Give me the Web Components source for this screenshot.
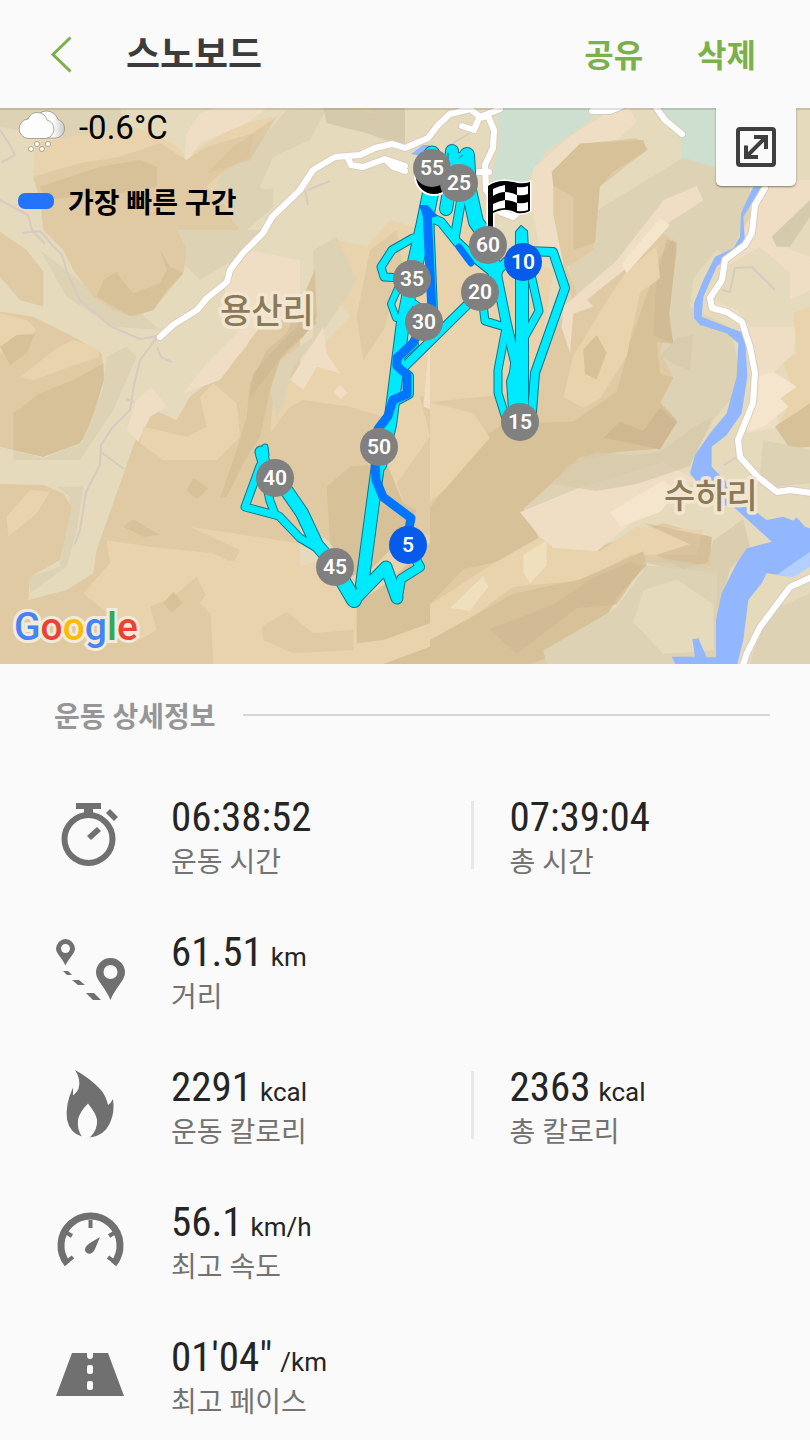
<!DOCTYPE html>
<html lang="ko">
<head>
<meta charset="utf-8">
<meta name="viewport" content="width=device-width, initial-scale=1">
<title>스노보드</title>
<style>
    body{
        margin: 0;
        background: #fafafa;
        font-family: Roboto, "Noto Sans CJK KR", sans-serif;
        color: #252525;
    }
</style>
</head>
<body>
<workout-page></workout-page>

<script>
class AppHeader extends HTMLElement{

    constructor() {
        super();
        this.shadowDOM = this.attachShadow({mode: "open"});
    }

    connectedCallback(){
        this.render();
    }

    render(){
        this.shadowDOM.innerHTML = `
        <style>
            :host{
                display: block;
            }
            header{
                display: flex;
                align-items: center;
                box-sizing: border-box;
                height: 108px;
                padding: 0 54px 0 48px;
                background: #fafafa;
            }
            button{
                padding: 0;
                border: 0;
                background: none;
                font: inherit;
                color: #7cb04b;
                cursor: pointer;
            }
            svg{
                display: block;
                width: 26px;
                height: 40px;
            }
            h1{
                flex: 1;
                margin: 0 0 0 52px;
                padding-top: 4px;
                font-size: 37px;
                font-weight: 700;
                line-height: 48px;
                color: #3c3c3c;
            }
            nav{
                display: flex;
                gap: 54px;
                padding-top: 4px;
                font-size: 32px;
                font-weight: 700;
                line-height: 48px;
            }
        </style>
        <header>
            <button aria-label="뒤로">
                <svg viewBox="0 0 26 40" fill="none" stroke="#7cb04b" stroke-width="3">
                    <path d="M22.500 3.500L5 20.500l17.500 17"/>
                </svg>
            </button>
            <h1><slot></slot></h1>
            <nav>
                <button>공유</button>
                <button>삭제</button>
            </nav>
        </header>
        `;
    }
}

// numbered kilometre marker, x and y are in map units
class KmPin extends HTMLElement{

    constructor() {
        super();
        this.shadowDOM = this.attachShadow({mode: "open"});
    }

    connectedCallback(){
        this.style.left = `${this.getAttribute('x') / 810 * 100}%`;
        this.style.top = `${(this.getAttribute('y') - 108) / 556 * 100}%`;
        this.render();
    }

    render(){
        this.shadowDOM.innerHTML = `
        <style>
            :host{
                position: absolute;
                width: 38px;
                height: 38px;
                margin: -19px 0 0 -19px;
                border-radius: 50%;
                background: #808080;
                color: #fff;
                font-size: 21px;
                font-weight: 600;
                line-height: 38px;
                text-align: center;
            }
            :host([fast]){
                background: #065bea;
            }
        </style>
        <slot></slot>
        `;
    }
}

// recorded route: [points, width]
const tracks = [
    ['432,154 432,186 424,225 411,282', 15],
    ['411,282 403,322 390,425 380,465', 12],
    ['378,465 362,585', 12],
    ['413,238 392,250 381,267 384,277 402,278', 7],
    ['398,288 391,304 396,318 404,318', 6],
    ['410,285 412,302 424,310', 6],
    ['452,151 450,185 446,209', 12],
    ['459,159 462,190', 12],
    ['467,155 469,190 476,222 489,240', 14],
    ['462,195 455,236', 8],
    ['424,220 434,219 441,222 457,242 470,254 490,270', 8],
    ['488,245 495,272', 14],
    ['493,276 507,261 522,256', 8],
    ['496,272 506,322 515,360', 9],
    ['482,296 485,321 505,327', 7],
    ['506,328 498,370 498,393 507,422', 7],
    ['530,270 539,311 524,338', 7],
    ['526,251 553,252 565,288 535,373 532,412', 8],
    ['468,304 401,370', 8],
    ['430,212 434,312', 6],
    ['414,344 398,358 398,367 409,376 409,394 394,402', 8],
    ['334,566 354,600', 14],
    ['356,598 386,567 397,598', 11],
    ['398,597 401,579 420,567 414,556', 8],
    ['282,484 302,513 317,545 330,560', 12],
    ['317,548 300,538 279,516 245,507 260,466', 7],
    ['261,452 267,474', 11],
    ['265,447 266,455', 5],
    ['267,487 270,501 275,514', 7]
];
const fastTracks = [
    ['427,211 432,312', 9],
    ['459,247 471,263', 7],
    ['422,326 413,343 397,358 397,366 407,375 407,394 393,400 388,416 378,429', 9],
    ['375,460 376,480 383,497 411,518 408,534', 9]
];
const column = 'M516 232L521 226 527 231 528 250V410H509L507 381 510 372 512 356 516 342z';
const roads = [
    'M160 337L173 325 197 310 207 298 227 282 230 270 243 253 263 233 272 217 300 190 313 170 335 157 360 155 375 148 392 144 405 148 428 138 438 125 450 114 470 109 480 117 500 109',
    'M348 158L351 165 363 167 385 159 405 166M385 159L393 167 405 171M462 126L474 130 479 118 488 116 494 130 493 148 485 165 486 190 500 212 513 217 524 207M477 172H489',
    'M592 111H610L622 106M655 106L665 120 682 134',
    'M765 188L755 205 752 233 745 245 725 260 722 280 710 298 712 308 727 312 742 322 750 347 755 373 753 403 738 440 740 457 758 477 777 492 790 490 812 493',
    'M812 577L790 587 760 627 747 653 742 668'
].join('');
const line = (list, extra) => list.map(([p, w]) => `<polyline points="${p}" stroke-width="${w + extra}"/>`).join('');

class RouteMap extends HTMLElement{

    constructor() {
        super();
        this.shadowDOM = this.attachShadow({mode: "open"});
    }

    connectedCallback(){
        this.render();
    }

    render(){
        this.shadowDOM.innerHTML = `
        <style>
            :host{
                display: block;
                position: relative;
                overflow: hidden;
                color: #000;
            }
            .map{
                display: block;
                width: 100%;
                height: auto;
            }
            .names{
                font-family: "Noto Sans CJK KR", sans-serif;
                font-size: 34px;
                font-weight: 500;
                fill: #8b7a5a;
                stroke: #f3e6d0;
                stroke-width: 7px;
                stroke-linejoin: round;
                paint-order: stroke;
            }
            .info{
                position: absolute;
                left: 18px;
                top: 0;
                line-height: 36px;
            }
            .weather, .legend{
                display: flex;
                align-items: center;
            }
            .weather{
                gap: 13px;
                font-size: 33px;
                line-height: 40px;
            }
            .weather svg{
                width: 48px;
                height: 44px;
            }
            .weather span{
                padding-bottom: 6px;
            }
            .legend{
                gap: 14px;
                margin-top: 26px;
                font-size: 28px;
                font-weight: 700;
            }
            .legend i{
                width: 36px;
                height: 16px;
                border-radius: 7px;
                background: #2374fb;
            }
            .legend span{
                padding-top: 6px;
            }
            .expand{
                position: absolute;
                top: 0;
                right: 14px;
                width: 80px;
                height: 78px;
                padding: 0;
                border: 0;
                border-radius: 0 0 5px 5px;
                background: #fafafa;
                box-shadow: 0 1px 2px rgba(0, 0, 0, .45);
            }
            .expand svg{
                display: block;
                margin: auto;
            }
            .logo{
                position: absolute;
                left: 14px;
                bottom: 14px;
                font-size: 39px;
                font-weight: 500;
                line-height: 46px;
                -webkit-text-stroke: 6px #f3ead9;
                paint-order: stroke fill;
            }
            .edge{
                position: absolute;
                inset: 0 0 auto;
                height: 2px;
                background: rgba(0, 0, 0, .12);
            }
        </style>
        <svg class="map" viewBox="0 108 810 556">
            <rect y="108" width="810" height="556" fill="#e5dabb"/>

            <!-- north west ridge -->
            <g transform="scale(.33333)">
                <path fill="#ddd2b4" d="M0 324H360L390 400 300 440 0 380zM640 520L740 440 800 400 860 330 980 324 930 420 820 470 780 560 810 600 740 690 640 740z"/>
                <path fill="#e8d3ad" d="M105 430L270 400 400 380 520 430 560 470 700 380 820 350 760 440 660 520 640 600 700 720 480 720 360 700 160 600 100 540z"/>
                <path fill="#efdec4" d="M560 400L600 340 640 324H800L740 370 600 430 550 500z"/>
                <path fill="#dfcaa4" d="M100 530L240 490 360 470 480 430 560 480 620 440 760 400 750 470 660 520 620 560 650 600 730 650 700 720H250L130 640z"/>
                <path fill="#d7c199" d="M120 560L300 500 420 480 470 500 470 560 380 580 400 660 330 620 140 600z"/>
                <path fill="#d7c199" d="M620 520L700 440 830 350 750 480z" opacity=".6"/>
                <path fill="#ddd2b4" d="M660 580L820 565 820 620 730 700 690 650zM880 370L920 330 944 380 900 415z"/>
                <path fill="#d5caab" d="M970 324H1215V440L1100 400 980 370z"/>
                <path fill="#dfcaa4" d="M1060 324H1110L1130 345 1100 335z"/>
            </g>
            <!-- western hills -->
            <g transform="translate(0 230) scale(.33333)">
                <path fill="#ddd2b4" d="M480 0H780L700 90 600 150 540 90zM120 60L300 200 420 250 480 300 340 290 200 200z"/>
                <path fill="#dfcaa4" d="M130 0L120 -90 470 -120 560 60 550 130 500 190 460 240 400 260 340 240 280 200 220 120 190 60z"/>
                <path fill="#d7c199" d="M480 60L510 110 550 130 500 180 460 240 390 258 290 200 310 150 350 125 365 150 400 190 480 160 500 120z"/>
                <path fill="#dfcaa4" d="M0 5L80 60 130 125 130 230 60 210 0 140zM0 245L100 260 220 320 305 370 312 440 290 530 250 630 130 680 40 660 0 650z"/>
                <path fill="#d7c199" d="M40 550L120 490 220 450 310 400 312 450 270 580 240 640 130 680 40 660z"/>
                <path fill="#e8d3ad" d="M0 250L80 270 110 300 20 370 0 370zM60 440L170 355 220 330 290 355 300 380 210 410 100 450z"/>
                <path fill="#d7c199" d="M0 350L50 315 105 312 80 370 30 405z"/>
                <path fill="#ddd2b4" d="M320 380L380 350 410 380 340 540 240 690H40V660L130 685 250 635 310 470zM90 1040L180 1010 210 800 170 770 250 770 230 900 200 1010 90 1090z"/>
                <path fill="#dfcaa4" d="M0 762L130 765 190 790 215 830 180 990 90 1040 85 1110 200 1080 280 1030 290 960 410 620 460 540 530 570 570 500 660 430 740 350 780 250 900 180V1302H0z"/>
                <path fill="#efdec4" d="M690 120L740 60 900 90V250L780 290 660 450 550 490 620 400 730 290 660 250zM455 470L500 530 450 560 415 635 380 600 410 510z"/>
                <path fill="#e8d3ad" d="M20 860L90 780 150 785 110 850 25 920zM600 500L640 460 710 520 720 620 650 690 490 690 420 640 430 590 560 620 620 590zM320 930L450 950 640 970 700 1000 720 960 570 890 900 940V1302H640L630 1120 590 1040 520 1100 450 1130 470 1200 420 1230 250 1090 330 1000z"/>
                <path fill="#d7c199" d="M370 890L400 868 480 915 430 920zM490 1120L520 1085 548 1118 515 1148zM560 780L580 745 625 775 590 808z"/>
            </g>
            <!-- central slopes -->
            <g transform="translate(170 250) scale(.33333)">
                <path fill="#e8d3ad" d="M430 30L500 -30 590 -10 660 -90 760 -60 900 -130V1242H240L130 1100 90 1060 180 930 330 970 540 900 470 600 300 560 310 440 540 200z"/>
                <path fill="#ddd2b4" d="M430 0L500 -40 560 90 470 230 370 350 340 460 320 510 300 420 330 330 430 260z"/>
                <path fill="#d7c199" d="M435 60L440 200 400 260 330 330 300 420 290 470 270 560 220 640 170 740 150 745 200 600 230 500 240 400 290 300 350 250z"/>
                <path fill="#cfb891" d="M430 180L440 220 340 310 290 380 240 440 250 370 330 280z" opacity=".7"/>
                <path fill="#dfcaa4" d="M400 450L540 470 640 500 600 600 580 760 600 900 560 930 440 850 340 720 300 550 360 470zM600 0L680 -60 700 60 640 240 580 330 560 200zM750 440L900 420V830L740 860 680 700 780 560z"/>
                <path fill="#d7c199" d="M470 710L540 650 650 640 700 760 740 780 700 860 600 960 540 980 480 880zM560 1060L650 1000 760 900 900 760V1062L780 1120 640 1170 560 1180zM900 1170L780 1190 640 1242H900z"/>
                <path fill="#dfcaa4" d="M275 1130L350 1085 430 1150 550 1140 550 1200 370 1210 280 1170z"/>
                <path fill="#efdec4" d="M360 390L460 230 470 310 510 370 440 350 400 420zM780 250L840 310 830 360 790 370 790 480 760 470zM490 425L510 405 533 428 512 447z"/>
                <path fill="#cfb891" d="M785 950L860 890 870 940 840 995z"/>
            </g>
            <!-- eastern hills -->
            <g transform="translate(430 108) scale(.33333 .3546)">
                <path fill="#e8d3ad" d="M0 278L120 320 200 380 370 460 330 700 300 800 0 830z"/>
                <path fill="#cddfce" d="M200 0H520L460 50 350 120 300 190 280 240 180 260 190 170 210 90zM670 0H960V200L860 195 755 160 755 90z"/>
                <path fill="#efdec4" d="M310 170L420 80 520 20 600 0 620 40 560 90 440 120 390 180 385 320 400 440 330 400 300 250z"/>
                <path fill="#ddd2b4" d="M480 300L760 140 960 200V460L860 400 790 480 780 560 900 620 940 780 850 880 780 1000 650 1060 440 1150 270 1130 400 980 520 850 380 600 420 440z"/>
                <path fill="#dfcaa4" d="M370 180L460 100 620 85 655 115 580 170 500 230 490 400 410 450 440 520 330 700 300 800 0 830V1568H350L480 1500 640 1280 840 1290 845 1210 700 1170 500 1240 330 1215 280 1130 440 1000 560 970 690 960 740 885 690 840 730 760 690 690 720 560 740 380 690 350 560 460 460 560 430 560 400 440 370 300z"/>
                <path fill="#d7c199" d="M365 180L450 100 640 90 650 120 550 180 510 220 495 380 430 400 430 250 370 220zM730 370L740 400 715 600 730 665 680 660 690 750 730 760 690 830 740 880 690 960 560 970 450 985 280 1130 330 1220 200 1280 100 1300 0 1400V1130L130 950 220 890 430 885 560 800 600 660 690 420z"/>
                <path fill="#cfb891" d="M710 370L740 380 718 580 730 665 670 640 680 480z" opacity=".7"/>
                <path fill="#cfb891" d="M690 845L742 885 690 962 520 930 570 885 640 910z"/>
                <path fill="#e8d3ad" d="M590 460L680 390 690 480 630 520 590 700 510 820 460 845 400 815 430 700 520 560zM0 1400L180 1290 330 1210 510 1250 620 1180 820 1190 800 1260 600 1260 480 1330 250 1350 120 1440 0 1500zM0 830L130 860 180 930 40 1080 0 1110z"/>
                <path fill="#d7c199" d="M460 680L500 640 530 690 500 765 465 750zM0 1500L250 1370 450 1330 640 1250 650 1290 560 1380 490 1500 300 1568H0z"/>
                <path fill="#cfb891" d="M180 1470L370 1400 480 1330 600 1280 640 1290 560 1400 440 1410 260 1540zM640 1170L845 1210 840 1280 760 1300 680 1260 780 1230z" opacity=".6"/>
                <path fill="#efdec4" d="M270 1140L450 1070 700 1000 800 1050 620 1160 500 1250 370 1240 330 1210zM400 560L560 430 700 260 800 220 820 260 690 340 580 460 470 540 490 560 430 580 420 690 395 620z"/>
                <path fill="#f5e5cd" d="M540 1140L700 1050 740 1080 690 1140 570 1180zM575 440L690 310 720 330 590 465z"/>
                <path fill="#efdfbc" d="M280 1260L350 1220 350 1290 300 1340 280 1310zM60 1410L160 1320 175 1350 120 1418z"/>
                <path fill="#d5caab" d="M690 700L740 650 790 640 780 740 730 720zM370 1060L410 1010 500 970 610 980 690 970 790 900 850 870 780 1010 620 1060 500 1080zM640 1280L700 1270 830 1290 850 1220 940 1160 960 1240 900 1300 860 1440 800 1320z" opacity=".75"/>
                <path fill="#ddd2b4" d="M340 1530L560 1410 650 1290 860 1310 860 1568H350z"/>
                <path fill="#e5dabb" d="M610 1450L640 1360 740 1330 850 1400 850 1530 700 1540z"/>
            </g>
            <!-- south east valley -->
            <g transform="translate(560 180) scale(.33333)">
                <path fill="#efdec4" d="M620 20L700 0H750V60L640 190 750 230V330L690 360 710 400 700 520 620 600 660 740 560 760 590 620 560 430 460 380 500 240z"/>
                <path fill="#e5dabb" d="M500 260L600 200 690 280 690 370 720 400 700 440 570 440 530 390 460 360z"/>
                <path fill="#d5caab" d="M635 170L750 60V110L690 200 650 200z"/>
                <path fill="#e8d3ad" d="M700 400L750 380V700L650 740 685 680 660 650 700 630 670 550 710 520z"/>
                <path fill="#d7c199" d="M645 740L750 670V800L690 805z"/>
                <path fill="#f5e5cd" d="M590 590L640 575 710 620 660 655 685 680 610 740 560 755z"/>
                <path fill="#ddd2b4" d="M610 780L750 810V910L650 920 600 880zM600 1350L660 1280 750 1240V1452H570z"/>
            </g>

            <!-- streams -->
            <g fill="none" stroke="#d6cbc1" stroke-width="2" stroke-linejoin="round">
                <path d="M22 233L40 231 52 245 62 255 68 275 80 300 110 326 140 339 158 336 140 360 134 385 130 410 112 428 101 445 100 465 86 492 80 530 75 544M157 347L161 357 172 362M101 452L124 469M0 130L10 145 15 155 2 162M0 200L28 215 32 230 45 244M126 399L134 402"/>
                <path d="M305 190L308 205M308 190L330 181M722 290L730 292 735 268 752 267 775 290M724 465L735 458 745 462M450 145L470 133"/>
            </g>
            <!-- river and lake -->
            <g transform="translate(560 180) scale(.33333)" fill="#92b7ff">
                <path d="M580 20L543 100 540 170 520 205 465 230 430 300 402 370V415L420 435 500 460 535 490 530 590 500 700 450 760 405 825 390 880 460 970 520 980 635 1085 560 1105 530 1150 485 1240 468 1320V1432H440L415 1375 397 1378 405 1430 335 1430 350 1460H530L550 1380 565 1260 605 1210 620 1180 700 1190 750 1130V1045L735 1040 710 1012 700 1022 670 1010 620 1020 580 990 455 860V800L500 765 545 700 562 590 555 460 500 440 425 410 430 350 470 260 555 185 550 110 605 20z"/>
                <path fill="#b3cfff" d="M650 1185L750 1115V1160L700 1192z"/>
            </g>
            <path fill="#92b7ff" d="M411 154L423 145 430 145 422 156z"/>
            <!-- roads -->
            <g fill="none" stroke-linecap="round" stroke-linejoin="round">
                <path stroke="#d9cdc0" stroke-width="8" d="${roads}"/>
                <path stroke="#fff" stroke-width="6" d="${roads}"/>
            </g>
            <g class="names">
                <text x="220" y="323">용산리</text>
                <text x="664" y="508">수하리</text>
            </g>

            <!-- recorded route -->
            <g fill="none" stroke-linejoin="round" stroke-linecap="round">
                <g stroke="#0e7389">${line(tracks, 2)}</g>
                <path stroke="#0e7389" stroke-width="2" d="${column}"/>
                <g stroke="#00eaff">${line(tracks, 0)}</g>
                <path fill="#00eaff" d="${column}"/>
                <g stroke="#0075ff">${line(fastTracks, 0)}</g>
                <path fill="#0075ff" d="M419 205h8l11 11-8 2-7-2z"/>
                <path stroke="#0e7389" d="M448 153v10M459 158l4-3"/>
            </g>
            <!-- start and finish -->
            <circle cx="434" cy="176" r="19" fill="#000" stroke="#fff" stroke-width="2"/>
            <path fill="#000" stroke="#fff" stroke-width="3" paint-order="stroke" d="M488 186q7-5 16-5 8 0 14 2 6 1 12-1v29q-6 3-13 2-8-4-15-3-5 1-9 3v20h-5z"/>
            <path fill="#fff" d="M493 189q6-3 12-4v7q-6 0-12 4zM517 187q6 1 11-1v8q-5 2-11 1zM505 192q6 0 12 3v8q-6-3-12-3zM493 204q6-3 12-4v8q-6 0-12 3zM517 203q6 1 11-1v8q-5 2-11 1z"/>
        </svg>
        <div class="edge"></div>
        <km-pin x="432" y="168">55</km-pin>
        <km-pin x="459" y="183">25</km-pin>
        <km-pin x="488" y="245">60</km-pin>
        <km-pin x="523" y="262" fast>10</km-pin>
        <km-pin x="412" y="279">35</km-pin>
        <km-pin x="480" y="292">20</km-pin>
        <km-pin x="424" y="322">30</km-pin>
        <km-pin x="520" y="422">15</km-pin>
        <km-pin x="379" y="447">50</km-pin>
        <km-pin x="275" y="478">40</km-pin>
        <km-pin x="408" y="545" fast>5</km-pin>
        <km-pin x="335" y="567">45</km-pin>

        <div class="info">
            <div class="weather">
                <svg viewBox="0 0 48 44">
                    <defs>
                        <linearGradient id="back"><stop offset=".5" stop-color="#fff"/><stop offset="1" stop-color="#c9c9c9"/></linearGradient>
                    </defs>
                    <g stroke="#8d8672" stroke-width=".7">
                        <path fill="url(#back)" d="M22 29h16a9.500 9.500 0 0 0 2-18.500A12 12 0 0 0 22 4z"/>
                        <path fill="#fdfdfd" d="M10 29.500h18a9.500 9.500 0 0 0 1-18.500 10 10 0 0 0-19-1 9.800 9.800 0 0 0 0 19.500z"/>
                        <g fill="#fff">
                            <circle cx="19" cy="35" r="2.500"/><circle cx="30" cy="35" r="2.500"/>
                            <circle cx="13" cy="40" r="2.500"/><circle cx="24" cy="40" r="2.500"/>
                        </g>
                    </g>
                </svg>
                <span>-0.6°C</span>
            </div>
            <div class="legend"><i></i><span>가장 빠른 구간</span></div>
        </div>
        <button class="expand" aria-label="지도 확대">
            <svg width="40" height="40" viewBox="0 0 40 40" fill="none" stroke="#3f3f3f" stroke-width="4">
                <rect x="2" y="2" width="36" height="36" rx="2"/>
                <path d="M18 10h12v12M10 18.500V30h12M29 11L11 29"/>
            </svg>
        </button>
        <div class="logo"><span style="color:#4285f4">G</span><span style="color:#ea4335">o</span><span style="color:#fbbc05">o</span><span style="color:#4285f4">g</span><span style="color:#34a853">l</span><span style="color:#ea4335">e</span></div>
        `;
    }
}

class SectionTitle extends HTMLElement{

    constructor() {
        super();
        this.shadowDOM = this.attachShadow({mode: "open"});
    }

    connectedCallback(){
        this.render();
    }

    render(){
        this.shadowDOM.innerHTML = `
        <style>
            :host{
                display: flex;
                align-items: center;
                gap: 27px;
                padding: 28px 40px 29px 54px;
            }
            h2{
                margin: 0;
                padding-top: 6px;
                font-size: 28px;
                font-weight: 700;
                line-height: 40px;
                color: #969696;
            }
            hr{
                flex: 1;
                margin: 0;
                border: 0;
                border-top: 2px solid #d6d6d6;
            }
        </style>
        <h2><slot></slot></h2>
        <hr>
        `;
    }
}

class StatRow extends HTMLElement{

    constructor() {
        super();
        this.shadowDOM = this.attachShadow({mode: "open"});
    }

    connectedCallback(){
        this.render();
    }

    render(){
        this.shadowDOM.innerHTML = `
        <style>
            :host{
                display: grid;
                grid-template-columns: 117px 1fr 1fr;
                align-items: center;
                height: 135px;
                padding: 0 40px 0 54px;
            }
            svg{
                display: block;
                width: 72px;
                height: 72px;
                fill: #707070;
            }
        </style>
        <svg viewBox="0 0 72 72">${icons[this.getAttribute('icon')]}</svg>
        <slot></slot>
        `;
    }
}

class StatValue extends HTMLElement{

    constructor() {
        super();
        this.shadowDOM = this.attachShadow({mode: "open"});
    }

    connectedCallback(){
        this.render();
    }

    render(){
        const unit = this.getAttribute('unit');
        this.shadowDOM.innerHTML = `
        <style>
            :host{
                display: flex;
                flex-direction: column;
                justify-content: center;
                box-sizing: border-box;
                height: 68px;
                padding-top: 10px;
            }
            :host(:nth-child(2)){
                border-left: 3px solid #e8e8e8;
                padding-left: 36px;
            }
            .value{
                display: flex;
                align-items: baseline;
                gap: 8px;
                font-family: "Roboto Condensed", Roboto, sans-serif;
                font-size: 41px;
                line-height: 46px;
            }
            .unit{
                font-family: Roboto, sans-serif;
                font-size: 26px;
                line-height: 28px;
            }
            .label{
                font-size: 28px;
                line-height: 46px;
                color: #737373;
            }
        </style>
        <div class="value"><span>${this.getAttribute('value')}</span>${unit ? `<span class="unit">${unit}</span>` : ''}</div>
        <div class="label"><slot></slot></div>
        `;
    }
}

const icons = {
    time: `
        <path d="M22 4h25v6h-8v5h-9v-5h-8z"/>
        <circle cx="34.500" cy="40" r="24" fill="none" stroke="#707070" stroke-width="6"/>
        <path d="M33 37l10-9 4 4-10 9zM56 10l8 8-4 4-8-8z"/>`,
    distance: `
        <path fill-rule="evenodd" d="M11.500 5a10 10 0 0 1 9.500 9.500c0 5-6 9-9.500 17-3.500-8-9.500-12-9.500-17A10 10 0 0 1 11.500 5zm0 5a4.500 4.500 0 1 0 0 9 4.500 4.500 0 0 0 0-9z"/>
        <path fill-rule="evenodd" d="M56.500 24a14.500 14.500 0 0 1 14.500 14.500c0 8-9 14-14.500 27.500-5.500-13.500-14.500-19.500-14.500-27.500A14.500 14.500 0 0 1 56.500 24zm0 7a7 7 0 1 0 0 14 7 7 0 0 0 0-14z"/>
        <path d="M9 37h5l4 4h-5zM18 46h7l6 5h-7zM32 59h8l7 7h-8z"/>`,
    calories: `
        <path d="M21 1q15 8 26 20 5 6 7 15 3-2 5-6 2 13-3 24-6 13-20 14.500 8-8 7-18-1-6-9-16-8 8-10 16-1 11 4 17-12-3-15-17-2-15 6-32v8q8-6 6-16-1-5-4-9.500z"/>`,
    speed: `
        <path fill="none" stroke="#707070" stroke-width="7" d="M13.500 60a29.500 29.500 0 1 1 46 0"/>
        <path fill="none" stroke="#707070" stroke-width="4" d="M36.500 16v8M13 29l5 3M60 29l-5 3M11 59l8-6M62 59l-8-6"/>
        <path d="M46 33l-10 6c-5 3-6 7-4 9 2 3 7 2 9-3z"/>`,
    pace: `
        <path fill-rule="evenodd" d="M18 14h15v3q0 3 3 3t3-3v-3h15l16 43H2zM35 26q-2 0-2 2v5q0 2 2 2h2q2 0 2-2v-5q0-2-2-2zM35 42q-2 0-2 2v5q0 2 2 2h2q2 0 2-2v-5q0-2-2-2z"/>`
};

class WorkoutPage extends HTMLElement{

    constructor() {
        super();
        this.shadowDOM = this.attachShadow({mode: "open"});
    }

    connectedCallback(){
        this.render();
    }

    render(){
        this.shadowDOM.innerHTML = `
        <style>
            :host{
                display: block;
            }
        </style>
        <app-header>스노보드</app-header>
        <main>
            <route-map></route-map>
            <section-title>운동 상세정보</section-title>
            <stat-row icon="time">
                <stat-value value="06:38:52">운동 시간</stat-value>
                <stat-value value="07:39:04">총 시간</stat-value>
            </stat-row>
            <stat-row icon="distance">
                <stat-value value="61.51" unit="km">거리</stat-value>
            </stat-row>
            <stat-row icon="calories">
                <stat-value value="2291" unit="kcal">운동 칼로리</stat-value>
                <stat-value value="2363" unit="kcal">총 칼로리</stat-value>
            </stat-row>
            <stat-row icon="speed">
                <stat-value value="56.1" unit="km/h">최고 속도</stat-value>
            </stat-row>
            <stat-row icon="pace">
                <stat-value value="01'04&quot;" unit="/km">최고 페이스</stat-value>
            </stat-row>
        </main>
        `;
    }
}

customElements.define('app-header',AppHeader);
customElements.define('km-pin',KmPin);
customElements.define('route-map',RouteMap);
customElements.define('section-title',SectionTitle);
customElements.define('stat-row',StatRow);
customElements.define('stat-value',StatValue);
customElements.define('workout-page',WorkoutPage);
</script>
</body>
</html>
